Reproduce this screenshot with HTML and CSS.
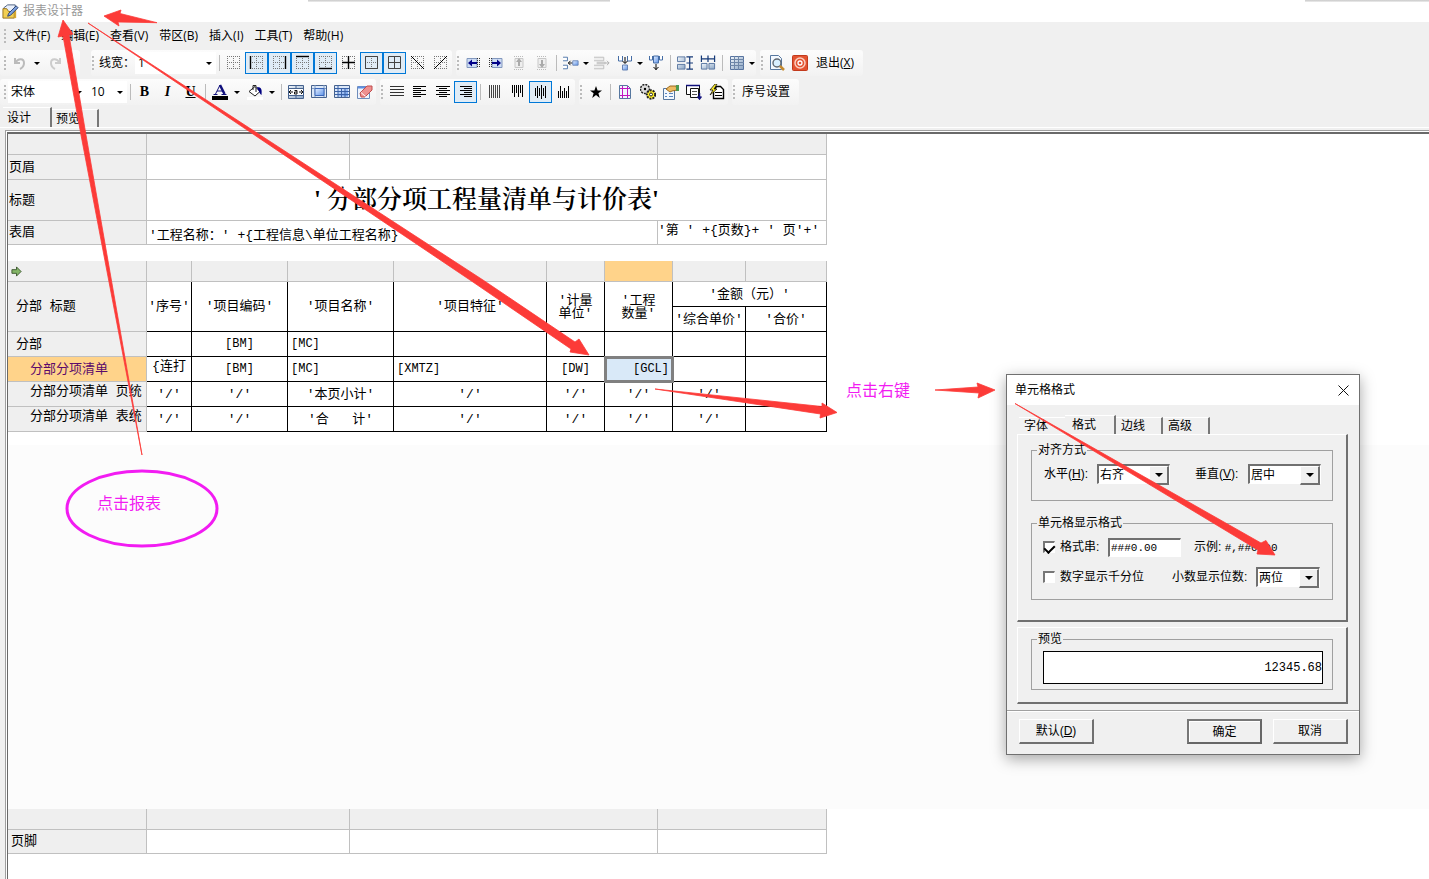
FILE: index.html
```html
<!DOCTYPE html>
<html lang="zh-CN">
<head>
<meta charset="utf-8">
<title>报表设计器</title>
<link rel="stylesheet" href="styles.css">
</head>
<body>
<svg class="sprite" aria-hidden="true">
  <defs>
    <linearGradient id="blue" x1="0" y1="0" x2="1" y2="1"><stop offset="0" stop-color="#e4efff"/><stop offset="1" stop-color="#5f93e8"/></linearGradient>
    <linearGradient id="steel" x1="0" y1="0" x2="1" y2="1"><stop offset="0" stop-color="#f2f7fc"/><stop offset="1" stop-color="#8ba5c4"/></linearGradient>
    <symbol id="dots" viewBox="0 0 16 16"><path d="M1.5 1v14M7.5 1v14M13.5 1v14M1 1.5h14M1 7.5h14M1 13.5h14" stroke="#777" fill="none" stroke-dasharray="1 1"/></symbol>
    <symbol id="b-left" viewBox="0 0 16 16"><use href="#dots"/><path d="M1.5 1v13" stroke="#000" stroke-width="1.4"/></symbol>
    <symbol id="b-right" viewBox="0 0 16 16"><use href="#dots"/><path d="M13.5 1v13" stroke="#000" stroke-width="1.4"/></symbol>
    <symbol id="b-top" viewBox="0 0 16 16"><use href="#dots"/><path d="M1 1.5h13" stroke="#000" stroke-width="1.4"/></symbol>
    <symbol id="b-bottom" viewBox="0 0 16 16"><use href="#dots"/><path d="M1 13.5h13" stroke="#000" stroke-width="1.4"/></symbol>
    <symbol id="b-cross" viewBox="0 0 16 16"><use href="#dots"/><path d="M1 7.5h13M7.5 1v13" stroke="#000" stroke-width="1.4"/></symbol>
    <symbol id="b-box" viewBox="0 0 16 16"><use href="#dots"/><path d="M1.5 1.5h12v12h-12z" stroke="#444" fill="none"/></symbol>
    <symbol id="b-all" viewBox="0 0 16 16"><path d="M1.5 1.5h12v12h-12zM7.5 1.500v12M1.500 7.5h12" stroke="#444" fill="none"/></symbol>
    <symbol id="b-d1" viewBox="0 0 16 16"><use href="#dots"/><path d="M1 1l13 13" stroke="#000"/></symbol>
    <symbol id="b-d2" viewBox="0 0 16 16"><use href="#dots"/><path d="M14 1L1 14" stroke="#000"/></symbol>
    <symbol id="undo" viewBox="0 0 16 16"><path d="M3 3v5h5M3.500 7.500C6 3 12 3 12 8c0 3-2 5-4 6" stroke="#bbb" stroke-width="2" fill="none"/></symbol>
    <symbol id="redo" viewBox="0 0 16 16"><path d="M13 3v5H8M12.500 7.500C10 3 4 3 4 8c0 3 2 5 4 6" stroke="#ccc" stroke-width="2" fill="none"/></symbol>
    <symbol id="ins-l" viewBox="0 0 16 16"><path d="M2 3.500h10v9H2z" fill="#cddcf4" stroke="#8298be"/><path d="M12.500 3v10M14.500 3v10" stroke="#333" stroke-dasharray="1 1"/><path d="M3 8l4-3.500V7h5v2H7v2.500z" fill="#000087"/></symbol>
    <symbol id="ins-r" viewBox="0 0 16 16"><path d="M4 3.500h10v9H4z" fill="#cddcf4" stroke="#8298be"/><path d="M1.500 3v10M3.500 3v10" stroke="#333" stroke-dasharray="1 1"/><path d="M13 8L9 4.500V7H4v2h5v2.500z" fill="#000087"/></symbol>
    <symbol id="ins-u" viewBox="0 0 16 16"><path d="M4 3.500h8v9H4z" fill="#eee" stroke="#c8c8c8"/><path d="M3 14.500h10M3 1.500h10" stroke="#bbb" stroke-dasharray="1 1"/><path d="M8 3l3 4H9v4H7V7H5z" fill="#aaa"/></symbol>
    <symbol id="ins-d" viewBox="0 0 16 16"><path d="M4 3.500h8v9H4z" fill="#eee" stroke="#c8c8c8"/><path d="M3 14.500h10M3 1.500h10" stroke="#bbb" stroke-dasharray="1 1"/><path d="M8 13l3-4H9V5H7v4H5z" fill="#aaa"/></symbol>
    <symbol id="row-ins" viewBox="0 0 18 16"><path d="M0 1.500h5v4H0M0 10.500h5v4H0" fill="#fff" stroke="#456da5"/><path d="M6 8h5M8.500 5.500L6 8l2.500 2.500" stroke="#000" fill="none"/><path d="M11 5.500h6v5h-6z" fill="url(#blue)" stroke="#6482b4"/></symbol>
    <symbol id="row-del" viewBox="0 0 18 16"><path d="M0 1.500h11v4H0M0 10.500h11v4H0" fill="#eee" stroke="#bbb"/><path d="M3 6.500h10v3H3z" fill="#ccc"/><path d="M12 8h5M14.500 5.500L17 8l-2.500 2.500" stroke="#aaa" fill="none"/></symbol>
    <symbol id="col-ins" viewBox="0 0 16 16"><path d="M1.500 1v5h4V1M10.500 1v5h4V1" fill="#fff" stroke="#456da5"/><path d="M8 8V2M5.500 6L8 8.500 10.500 6" stroke="#000" fill="none"/><path d="M5.500 10h5v5h-5z" fill="url(#blue)" stroke="#6482b4"/></symbol>
    <symbol id="col-del" viewBox="0 0 16 16"><path d="M1.500 1v4h3V1M11.500 1v4h3V1" fill="#fff" stroke="#456da5"/><path d="M5.500 1h5v7h-5z" fill="url(#blue)" stroke="#456da5"/><path d="M8 9v6M5.500 12L8 14.500 10.500 12" stroke="#000" fill="none"/></symbol>
    <symbol id="h-even" viewBox="0 0 17 16"><path d="M.5 1.500h8v5h-8zM.5 9.500h8v5h-8z" fill="url(#steel)" stroke="#5874a0"/><path d="M10 1.500h7M10 8h7M10 14.500h7M13.500 1v14" stroke="#163a78" stroke-width="1.300"/></symbol>
    <symbol id="w-even" viewBox="0 0 17 16"><path d="M1.500 8.500h6v6h-6zM9.500 8.500h6v6h-6z" fill="url(#steel)" stroke="#5874a0"/><path d="M1.500 0v7M8.500 0v7M15.500 0v7M1 3.500h15" stroke="#163a78" stroke-width="1.300"/></symbol>
    <symbol id="grid" viewBox="0 0 16 16"><path d="M1.500 1.500h13v13h-13z" fill="url(#steel)" stroke="#5874a0"/><path d="M1 4.500h14M1 7.500h14M1 10.500h14M5.500 1v14M9.500 1v14" stroke="#6e86a8"/></symbol>
    <symbol id="find" viewBox="0 0 16 16"><path d="M1.500.5h8l3 3v11h-11z" fill="#f3f8fe" stroke="#56779f"/><circle cx="8" cy="8" r="4" fill="#d8efff" stroke="#5f6770" stroke-width="1.400"/><path d="M11 11l4 4" stroke="#c58a2e" stroke-width="2.500"/></symbol>
    <symbol id="quit" viewBox="0 0 16 16"><rect x=".5" y=".5" width="15" height="15" rx="1" fill="#e35330" stroke="#c23a1c"/><circle cx="8" cy="8" r="5" fill="none" stroke="#fbd0c0" stroke-width="1.500"/><circle cx="8" cy="8" r="2" fill="none" stroke="#fff" stroke-width="1.300"/></symbol>
    <symbol id="font-color" viewBox="0 0 16 16"><path d="M3.500 10L8 1" stroke="#10107c" fill="none"/><path d="M8 1l4.500 9" stroke="#10107c" stroke-width="2.500" fill="none"/><path d="M5 7h6M1.500 10.500h4M9.500 10.500h5" stroke="#10107c" fill="none"/><path d="M0 12h16v4H0z"/></symbol>
    <symbol id="bucket" viewBox="0 0 16 16"><path d="M2 7.500l6-5 5 5-5 4.500z" fill="#fff" stroke="#222"/><path d="M6 6V1.500h3V8" fill="none" stroke="#222"/><path d="M10 3c5 0 5 3 4.500 8-2-1-2-4-4-6z" fill="#000080"/><path d="M0 13h16v3H0z" fill="#fff"/></symbol>
    <symbol id="merge" viewBox="0 0 16 16"><path d="M.5 1.500h15v13H.5z" fill="url(#steel)" stroke="#46628e"/><path d="M1 4.500h14M1 11.500h14M8 1v3M8 12v3" stroke="#46628e"/><path d="M1 5h14v6H1z" fill="#fff"/><path d="M1 8h4M3 6L1 8l2 2M15 8h-4M13 6l2 2-2 2M6.500 6.500h2.500v3.500H6.500V8H9" stroke="#111" fill="none"/></symbol>
    <symbol id="cell" viewBox="0 0 16 16"><path d="M.5 1.500h15v12H.5z" fill="#dce8f8" stroke="#46628e"/><path d="M4 1v12M1 4.500h14M13 1v12" stroke="#7f9ac0"/><path d="M4 4.500h9v7H4z" fill="url(#blue)" stroke="#3c68ba"/></symbol>
    <symbol id="cells" viewBox="0 0 16 16"><path d="M.5 1.500h15v12H.5z" fill="#dce8f8" stroke="#46628e"/><path d="M4 4.500h10v8H4z" fill="url(#blue)"/><path d="M4 1v12M1 4.500h14M7.500 4v9M11 4v9M1 7.500h14M1 10.500h14" stroke="#3a62a8"/></symbol>
    <symbol id="erase" viewBox="0 0 16 16"><path d="M.5 2.500h12v12H.5z" fill="#eef4fd" stroke="#6d8cbb"/><path d="M1 3.500h11" stroke="#5f8fe0" stroke-width="2"/><path d="M3 9l7-7h5v4l-7 7H4z" fill="#ee9090" stroke="#c04d4d"/><path d="M4 8.500l4.500 4" stroke="#fff"/></symbol>
    <symbol id="a-just" viewBox="0 0 16 16"><path d="M1 2.500h14M1 5.500h14M1 8.500h14M1 11.500h14" stroke="#333"/></symbol>
    <symbol id="a-left" viewBox="0 0 16 16"><path d="M1 2.500h13M1 4.500h8M1 6.500h13M1 8.500h8M1 10.500h13M1 12.500h8" stroke="#000"/></symbol>
    <symbol id="a-center" viewBox="0 0 16 16"><path d="M1 2.500h14M4 4.500h8M1 6.500h14M4 8.500h8M1 10.500h14M4 12.500h8" stroke="#000"/></symbol>
    <symbol id="a-right" viewBox="0 0 16 16"><path d="M2 2.500h12M6 4.500h8M2 6.500h12M6 8.500h8M2 10.500h12M6 12.500h8" stroke="#000"/></symbol>
    <symbol id="v-just" viewBox="0 0 16 16"><path d="M2.500 1v13M4.500 1v13M6.500 1v13M8.500 1v13M10.500 1v13M12.500 1v13" stroke="#444"/></symbol>
    <symbol id="v-top" viewBox="0 0 16 16"><path d="M2.500 1v8M4.500 1v12M6.500 1v8M8.500 1v12M10.500 1v8M12.500 1v12" stroke="#000"/></symbol>
    <symbol id="v-mid" viewBox="0 0 16 16"><path d="M2.500 4v8M4.500 2v12M6.500 4v8M8.500 1v14M10.500 4v8M12.500 2v12" stroke="#000"/></symbol>
    <symbol id="v-bot" viewBox="0 0 16 16"><path d="M2.500 7v7M4.500 2v12M6.500 7v7M8.500 4v10M10.500 7v7M12.500 2v12" stroke="#000"/></symbol>
    <symbol id="star" viewBox="0 0 16 16"><path d="M8 2l1.600 4.500H14l-3.600 2.700L11.800 14 8 11l-3.800 3 1.400-4.800L2 6.500h4.400z"/></symbol>
    <symbol id="margins" viewBox="0 0 16 16"><path d="M2.500 1.500h8l3 3v10h-11z" fill="#f3f8fe" stroke="#56779f"/><path d="M5.500 2v12M10.500 2v12M3 4.500h10M3 11.500h10" stroke="#c018c0"/></symbol>
    <symbol id="gears" viewBox="0 0 16 16"><circle cx="5" cy="5" r="4.500" fill="#ddd" stroke="#222" stroke-width="1.500" stroke-dasharray="2 1"/><circle cx="11" cy="10.500" r="4.200" fill="#ffef2a" stroke="#222" stroke-width="2" stroke-dasharray="2 1"/><circle cx="5" cy="5" r="1.200"/><circle cx="11" cy="10.500" r="1.500" fill="#fff" stroke="#222"/></symbol>
    <symbol id="props" viewBox="0 0 16 16"><path d="M.5 4.500h11v11H.5z" fill="#f3f8fe" stroke="#56779f"/><path d="M2 9.500h2M6 9.500h4M2 12.500h2M6 12.500h4" stroke="#5b86bf"/><path d="M3 5l4-3h6l1 4-5 1-2 1z" fill="#eebb62" stroke="#9b6a20"/><path d="M13 1h3v6h-3z" fill="#4d9a50"/></symbol>
    <symbol id="list" viewBox="0 0 16 16"><path d="M.5 1.500h13v9H.5z" fill="#fff" stroke="#111"/><path d="M0 1.500h14" stroke="#10107c" stroke-width="1.500"/><path d="M4.500 4.500h8v9h-8z" fill="#fff" stroke="#111"/><path d="M6 7.500h5M6 10.500h5" stroke="#555"/><path d="M13.500 9v6M11.500 12.500l2 2.500 2-2.500" stroke="#10107c" stroke-width="1.500" fill="none"/></symbol>
    <symbol id="script" viewBox="0 0 16 16"><path d="M4.500 6.500l3-4h4l3 3v9h-10z" fill="#fff" stroke="#000" stroke-width="1.400"/><path d="M6 8.500h7M6 11.500h7" stroke="#000"/><path d="M6 0L1 6h3l-3 5 7-6H5l3-5z" fill="#ffef2a" stroke="#000" stroke-width=".7"/></symbol>
  </defs>
</svg>

<div class="app">
  <header class="titlebar">
    <svg class="logo" viewBox="0 0 18 18" aria-hidden="true"><path d="M2 5l4-3h8v12H2z" fill="#e9f0fb" stroke="#4a5f80"/><path d="M1 6h4l2 3h6v7H1z" fill="#f2cf52" stroke="#94701c"/><path d="M13 7h2v9h-2z" fill="#d9a92f"/><path d="M7 11l8-8 2 2-8 8-3 1z" fill="#7da0dd" stroke="#28406e"/></svg>
    <span>报表设计器</span>
  </header>

  <nav class="menubar">
    <i class="grip"></i>
    <button>文件(F)</button><button>编辑(E)</button><button>查看(V)</button><button>带区(B)</button><button>插入(I)</button><button>工具(T)</button><button>帮助(H)</button>
  </nav>

  <div class="toolrow">
    <div class="tools tools-history">
      <i class="grip"></i>
      <button class="tool" aria-label="撤销"><svg><use href="#undo"/></svg></button><button class="drop" aria-label="撤销列表"></button>
      <button class="tool" aria-label="重做"><svg><use href="#redo"/></svg></button>
    </div>
    <div class="tools">
      <i class="grip"></i>
      <label class="tool-label" for="line-width">线宽：</label>
      <span class="combo combo-line"><select id="line-width"><option>1</option></select></span>
      <i class="sep"></i>
      <button class="tool" aria-label="无边框"><svg><use href="#dots"/></svg></button>
      <button class="tool on" aria-label="左边框"><svg><use href="#b-left"/></svg></button>
      <button class="tool on" aria-label="右边框"><svg><use href="#b-right"/></svg></button>
      <button class="tool on" aria-label="上边框"><svg><use href="#b-top"/></svg></button>
      <button class="tool on" aria-label="下边框"><svg><use href="#b-bottom"/></svg></button>
      <button class="tool" aria-label="内边框"><svg><use href="#b-cross"/></svg></button>
      <button class="tool on" aria-label="外边框"><svg><use href="#b-box"/></svg></button>
      <button class="tool on" aria-label="全部边框"><svg><use href="#b-all"/></svg></button>
      <button class="tool" aria-label="斜线"><svg><use href="#b-d1"/></svg></button>
      <button class="tool" aria-label="反斜线"><svg><use href="#b-d2"/></svg></button>
    </div>
    <div class="tools">
      <i class="grip"></i>
      <button class="tool" aria-label="左插列"><svg><use href="#ins-l"/></svg></button>
      <button class="tool" aria-label="右插列"><svg><use href="#ins-r"/></svg></button>
      <button class="tool" aria-label="上插行"><svg><use href="#ins-u"/></svg></button>
      <button class="tool" aria-label="下插行"><svg><use href="#ins-d"/></svg></button>
      <i class="sep"></i>
      <button class="tool" aria-label="插入行"><svg><use href="#row-ins"/></svg></button><button class="drop narrow" aria-label="插入行选项"></button>
      <button class="tool" aria-label="删除行"><svg><use href="#row-del"/></svg></button>
      <button class="tool" aria-label="插入列"><svg><use href="#col-ins"/></svg></button><button class="drop narrow" aria-label="插入列选项"></button>
      <button class="tool" aria-label="删除列"><svg><use href="#col-del"/></svg></button>
      <i class="sep"></i>
      <button class="tool" aria-label="等高"><svg><use href="#h-even"/></svg></button>
      <button class="tool" aria-label="等宽"><svg><use href="#w-even"/></svg></button>
      <i class="sep"></i>
      <button class="tool" aria-label="表格"><svg><use href="#grid"/></svg></button><button class="drop narrow" aria-label="表格选项"></button>
    </div>
    <div class="tools">
      <i class="grip"></i>
      <button class="tool" aria-label="预览"><svg><use href="#find"/></svg></button>
      <button class="tool" aria-label="关闭"><svg><use href="#quit"/></svg></button>
      <button class="text-tool">退出(<u>X</u>)</button>
    </div>
  </div>

  <div class="toolrow">
    <div class="tools">
      <i class="grip"></i>
      <span class="combo combo-font"><select aria-label="字体"><option>宋体</option></select></span>
      <span class="combo combo-size"><select aria-label="字号"><option>10</option></select></span>
      <i class="sep"></i>
      <button class="tool letter">B</button>
      <button class="tool letter"><em>I</em></button>
      <button class="tool letter"><u>U</u></button>
      <i class="sep"></i>
      <button class="tool" aria-label="字体颜色"><svg><use href="#font-color"/></svg></button><button class="drop" aria-label="选择字体颜色"></button>
      <button class="tool" aria-label="填充颜色"><svg><use href="#bucket"/></svg></button><button class="drop" aria-label="选择填充颜色"></button>
      <i class="sep"></i>
      <button class="tool" aria-label="合并"><svg><use href="#merge"/></svg></button>
      <button class="tool" aria-label="单元格"><svg><use href="#cell"/></svg></button>
      <button class="tool" aria-label="拆分"><svg><use href="#cells"/></svg></button>
      <button class="tool" aria-label="清除"><svg><use href="#erase"/></svg></button>
    </div>
    <div class="tools">
      <i class="grip"></i>
      <button class="tool" aria-label="两端对齐"><svg><use href="#a-just"/></svg></button>
      <button class="tool" aria-label="左对齐"><svg><use href="#a-left"/></svg></button>
      <button class="tool" aria-label="居中"><svg><use href="#a-center"/></svg></button>
      <button class="tool on" aria-label="右对齐"><svg><use href="#a-right"/></svg></button>
      <i class="sep"></i>
      <button class="tool" aria-label="垂直分散"><svg><use href="#v-just"/></svg></button>
      <button class="tool" aria-label="顶端对齐"><svg><use href="#v-top"/></svg></button>
      <button class="tool on" aria-label="垂直居中"><svg><use href="#v-mid"/></svg></button>
      <button class="tool" aria-label="底端对齐"><svg><use href="#v-bot"/></svg></button>
    </div>
    <div class="tools">
      <i class="grip"></i>
      <button class="tool" aria-label="收藏"><svg><use href="#star"/></svg></button>
      <i class="sep"></i>
      <button class="tool" aria-label="页边距"><svg><use href="#margins"/></svg></button>
      <button class="tool" aria-label="设置"><svg><use href="#gears"/></svg></button>
      <button class="tool" aria-label="属性"><svg><use href="#props"/></svg></button>
      <button class="tool" aria-label="列表"><svg><use href="#list"/></svg></button>
      <button class="tool" aria-label="脚本"><svg><use href="#script"/></svg></button>
    </div>
    <div class="tools">
      <i class="grip"></i>
      <button class="text-tool">序号设置</button>
    </div>
  </div>

  <div class="tabs main-tabs">
    <button class="tab active">设计</button><button class="tab">预览</button>
  </div>

  <main class="frame">
    <div class="canvas">
      <table class="band page-band">
        <colgroup><col class="w139"><col class="w203"><col class="w308"><col class="w169"></colgroup>
        <tr class="head"><th></th><td></td><td></td><td></td></tr>
        <tr class="r25"><th>页眉</th><td></td><td></td><td></td></tr>
        <tr class="r41"><th>标题</th><td colspan="3" class="report-title">'&nbsp;分部分项工程量清单与计价表'</td></tr>
        <tr class="r24"><th>表眉</th><td colspan="2" class="low">'工程名称：'&nbsp;+{工程信息\单位工程名称}</td><td class="high">'第&nbsp;'&nbsp;+{页数}+&nbsp;'&nbsp;页'+'</td></tr>
      </table>
      <table class="band data-band">
        <colgroup><col class="w139"><col class="w45"><col class="w96"><col class="w106"><col class="w153"><col class="w58"><col class="w68"><col class="w73"><col class="w81"></colgroup>
        <tr class="head"><th><svg class="go" viewBox="0 0 12 12" aria-hidden="true"><path d="M1 4h5V1l5 5-5 5V8H1z" fill="#83b566" stroke="#39552c"/></svg></th><td></td><td></td><td></td><td></td><td></td><td class="picked"></td><td></td><td></td></tr>
        <tr class="r25"><th rowspan="2" class="in1">分部&nbsp;标题</th><td rowspan="2">'序号'</td><td rowspan="2">'项目编码'</td><td rowspan="2">'项目名称'</td><td rowspan="2">'项目特征'</td><td rowspan="2">'计量<br>单位'</td><td rowspan="2">'工程<br>数量'</td><td colspan="2">'金额（元）'</td></tr>
        <tr class="r25"><td>'综合单价'</td><td>'合价'</td></tr>
        <tr class="r25"><th class="in1">分部</th><td></td><td class="code">[BM]</td><td class="code left">[MC]</td><td></td><td></td><td></td><td></td><td></td></tr>
        <tr class="r25"><th class="in2 picked">分部分项清单</th><td class="high">{连打</td><td class="code">[BM]</td><td class="code left">[MC]</td><td class="code left">[XMTZ]</td><td class="code">[DW]</td><td class="code right cursor">[GCL]</td><td></td><td></td></tr>
        <tr class="r25"><th class="in2 high">分部分项清单&nbsp;页统</th><td>'/'</td><td>'/'</td><td>'本页小计'</td><td>'/'</td><td>'/'</td><td>'/'</td><td>'/'</td><td></td></tr>
        <tr class="r25"><th class="in2 high">分部分项清单&nbsp;表统</th><td>'/'</td><td>'/'</td><td>'合&nbsp;&nbsp;&nbsp;计'</td><td>'/'</td><td>'/'</td><td>'/'</td><td>'/'</td><td></td></tr>
      </table>
      <div class="blank"></div>
      <table class="band page-band foot-band">
        <colgroup><col class="w139"><col class="w203"><col class="w308"><col class="w169"></colgroup>
        <tr class="head"><th></th><td></td><td></td><td></td></tr>
        <tr class="r24"><th>页脚</th><td></td><td></td><td></td></tr>
      </table>
    </div>
  </main>
</div>

<i class="edge-shadow edge-mid"></i>
<i class="edge-shadow edge-right"></i>

<section class="dialog" role="dialog" aria-labelledby="dlg-title">
  <header class="dialog-title">
    <span id="dlg-title">单元格格式</span>
    <button class="close" aria-label="关闭"><svg viewBox="0 0 11 11"><path d="M.5.5l10 10M10.500.5l-10 10" stroke="#111" fill="none"/></svg></button>
  </header>
  <div class="dialog-body">
    <div class="tabs dialog-tabs">
      <button class="tab">字体</button><button class="tab active">格式</button><button class="tab">边线</button><button class="tab">高级</button>
    </div>
    <div class="panel panel-format">
      <fieldset>
        <legend>对齐方式</legend>
        <div class="fields">
          <label for="h-align">水平(<u>H</u>):</label>
          <span class="combo sunken w72"><select id="h-align"><option>右齐</option></select></span>
          <label class="second" for="v-align">垂直(<u>V</u>):</label>
          <span class="combo sunken w72"><select id="v-align"><option>居中</option></select></span>
        </div>
      </fieldset>
      <fieldset class="display-format">
        <legend>单元格显示格式</legend>
        <div class="fields">
          <label><input type="checkbox" class="check" checked>格式串:</label>
          <input class="pattern" type="text" value="###0.00" aria-label="格式串">
          <span class="second">示例: <span class="mask">#,##0.00</span></span>
        </div>
        <div class="fields">
          <label><input type="checkbox" class="check">数字显示千分位</label>
          <label class="digits" for="digits">小数显示位数:</label>
          <span class="combo sunken w64"><select id="digits"><option>两位</option></select></span>
        </div>
      </fieldset>
    </div>
    <div class="panel panel-preview">
      <fieldset>
        <legend>预览</legend>
        <output class="sample">12345.68</output>
      </fieldset>
    </div>
  </div>
  <footer class="dialog-actions">
    <button class="push">默认(<u>D</u>)</button>
    <button class="push primary">确定</button>
    <button class="push">取消</button>
  </footer>
</section>

<svg class="marks" viewBox="0 0 1429 879" aria-hidden="true">
  <g fill="#fc3b38" stroke="#fc3b38" stroke-width=".8">
    <path d="M104 16l17-6-1 3.500 37 9.200-39-.7 1 4z"/>
    <path d="M63 20l10 14-4 1 17 100 56 320L81 135 63 36l-5 1z"/>
    <path d="M88 23L483 280l92 62 4-3 10 16-19-3 1-3-101-69z"/>
    <path d="M655 389l167 17.500V403l15 9.500-17 5.500.5-4z"/>
    <path d="M935 390l43-3-1-4 18 7-17 8 1-5z"/>
    <path d="M1015 403.500l246 139.500 5-2.500 9 14.500-18-1 1-4z"/>
  </g>
  <ellipse cx="142" cy="508.500" rx="75" ry="37.500" fill="none" stroke="#f21cf2" stroke-width="3"/>
</svg>
<p class="note note-report">点击报表</p>
<p class="note note-click">点击右键</p>
</body>
</html>
```

FILE: styles.css
```css
* { box-sizing: border-box; }

body {
  margin: 0;
  background: #fff;
  color: #000;
  font: 12px/16px "Open Sans", "Noto Sans CJK SC", sans-serif;
}

button, select, input {
  margin: 0;
  padding: 0;
  border: 0;
  background: none;
  color: inherit;
  font: inherit;
}

.sprite { position: absolute; width: 0; height: 0; }

.app {
  display: flex;
  flex-direction: column;
  min-height: 100vh;
  background: #f0f0f0;
}

.titlebar {
  display: flex;
  align-items: center;
  gap: 4px;
  height: 22px;
  padding-left: 2px;
  background: #fff;
  color: #999;
}
.logo { width: 17px; height: 17px; }

.menubar {
  display: flex;
  align-items: center;
  gap: 11px;
  height: 28px;
  padding-left: 4px;
}
.menubar button { white-space: nowrap; }
.menubar .grip { margin-right: -6px; }

.grip {
  flex: none;
  width: 4px;
  height: 14px;
  background: repeating-linear-gradient(#bbb 0 2px, transparent 2px 4px) no-repeat left / 2px 14px;
}

/* toolbars */
.toolrow {
  display: flex;
  gap: 4px;
  height: 29px;
}
.tools {
  display: flex;
  align-items: center;
  height: 26px;
  padding-left: 1px;
  border-radius: 3px;
  background: linear-gradient(#fcfcfc, #f2f2f2);
}
.toolrow .tools:first-child { padding-left: 4px; }
.tools-history { width: 80px; margin-right: 7px; }
.tool {
  display: flex;
  flex: none;
  align-items: center;
  justify-content: center;
  width: 23px;
  height: 22px;
}
.tool svg { width: 16px; height: 16px; }
.tool.on { border: 1px solid #0078d7; background: #e0ecf6; }
.letter { font: bold 14px "Liberation Serif", serif; }
.text-tool { padding: 0 9px 0 5px; white-space: nowrap; }
.drop { display: flex; flex: none; justify-content: center; width: 12px; height: 22px; align-items: center; }
.drop.narrow { width: 8px; }
.drop::after, .combo::after {
  content: "";
  border: 3px solid transparent;
  border-top-color: #000;
  border-bottom: 0;
}
.sep { flex: none; width: 1px; height: 16px; margin: 0 2px 0 3px; background: #bbb; }
.tool-label { padding-left: 3px; white-space: nowrap; }

.combo { position: relative; display: flex; flex: none; align-items: center; background: #fff; }
.combo::after { position: absolute; right: 4px; pointer-events: none; }
.combo select { width: 100%; height: 22px; appearance: none; outline: 0; }
.combo-line { width: 81px; }
.combo-line select { padding-left: 3px; }
.combo-font { width: 78px; }
.combo-font select { padding-left: 3px; }
.combo-size { width: 41px; }
.combo-size select { padding-left: 5px; }

/* tabs */
.tabs { display: flex; align-items: flex-end; }
.tab {
  height: 18px;
  border-top: 1px solid #fff;
  border-right: 2px solid #777;
  text-align: left;
  line-height: 16px;
}
.main-tabs { height: 20px; padding-left: 3px; border-bottom: 1px solid #fff; }
.main-tabs .tab { width: 47px; padding-left: 4px; }
.main-tabs .active { height: 20px; width: 49px; }

/* report */
.frame {
  display: flex;
  flex: 1;
  margin: 2px 0 0 5px;
  padding: 1px 0 0 1px;
  border-top: 1px solid #a0a0a0;
  border-left: 1px solid #a0a0a0;
  background: #fff;
}
.canvas {
  display: flex;
  flex: 1;
  flex-direction: column;
  border-top: 2px solid #696969;
  border-left: 1px solid #696969;
  padding-bottom: 25px;
  background: #fff;
}
.band {
  flex: none;
  width: 819px;
  table-layout: fixed;
  border-spacing: 0;
  font: 13px/13px "Liberation Mono", "Noto Sans CJK SC", monospace;
}
.band th, .band td {
  padding: 0;
  border: solid #c0c0c0;
  border-width: 0 1px 1px 0;
  font-weight: normal;
  text-align: center;
  white-space: nowrap;
}
.band th { background: #efefef; text-align: left; padding-left: 1px; }
.band .head td { background: #efefef; }
.band .head { height: 21px; }
.r24 { height: 24px; }
.r25 { height: 25px; }
.r41 { height: 41px; }
.w45 { width: 45px; }
.w58 { width: 58px; }
.w68 { width: 68px; }
.w73 { width: 73px; }
.w81 { width: 81px; }
.w96 { width: 96px; }
.w106 { width: 106px; }
.w139 { width: 139px; }
.w153 { width: 153px; }
.w169 { width: 169px; }
.w203 { width: 203px; }
.w308 { width: 308px; }

.data-band { margin-top: 16px; }
.data-band tr:not(.head) td { border-color: #000; }
.band .report-title { font: 600 25px/30px "Liberation Serif", "Noto Serif CJK SC", "Noto Sans CJK SC", serif; }
.band .low { text-align: left; vertical-align: bottom; padding: 0 0 2px 2px; }
.band .high { vertical-align: top; padding-top: 3px; }
.page-band .high { text-align: left; }
.band .in1 { padding-left: 8px; }
.band .in2 { padding-left: 22px; }
.band .picked, .band .head .picked { background: #ffd38a; }
.band th.picked { color: #5b0a6b; }
.band .code { font-size: 12px; }
.band .left { text-align: left; padding-left: 3px; }
.band .right { text-align: right; padding-right: 3px; }
.band .cursor { background: #d9e9f8; outline: 3px solid #808080; outline-offset: -2px; }
.go { display: block; width: 11px; height: 11px; margin-left: 2px; }
.foot-band th { padding-left: 3px; }
.blank { flex: 1; min-height: 40px; margin-top: 13px; background: #fcfcfc; }

.edge-shadow { position: absolute; top: 0; height: 2px; background: linear-gradient(#c8c8c8, #eee); }
.edge-mid { left: 308px; width: 302px; }
.edge-right { right: 0; width: 124px; }

/* cell format dialog */
.dialog {
  position: absolute;
  top: 374px;
  left: 1006px;
  width: 354px;
  border: 1px solid #707070;
  background: #f0f0f0;
  box-shadow: 0 4px 14px rgba(0, 0, 0, .35);
  font: 12px/16px "Liberation Sans", "Noto Sans CJK SC", sans-serif;
}
.dialog-title {
  display: flex;
  align-items: center;
  justify-content: space-between;
  height: 30px;
  padding: 0 10px 0 8px;
  background: #fff;
}
.close { display: flex; }
.close svg { width: 11px; height: 11px; }
.dialog-body { padding: 10px 11px 6px 10px; }
.dialog-tabs { height: 19px; padding-left: 2px; }
.dialog-tabs .tab { width: 47px; height: 17px; padding-left: 5px; }
.dialog-tabs .active { width: 51px; height: 19px; padding-left: 7px; }
.dialog-tabs .tab:first-child { width: 46px; border-right: 0; }
.panel {
  border: solid;
  border-width: 1px 2px 2px 1px;
  border-color: #fff #707070 #707070 #fff;
  padding: 7px 13px 0;
}
.panel-format { height: 188px; }
.panel-preview { height: 77px; margin-top: 5px; padding-top: 3px; }
fieldset {
  min-width: 0;
  height: 59px;
  margin: 0;
  padding: 0 10px 0 5px;
  border: 1px solid #a0a0a0;
}
legend { padding: 0 1px; }
.display-format { height: 85px; margin-top: 14px; }
.fields { display: flex; align-items: center; height: 20px; margin: 6px 0 0 7px; }
.fields label { display: flex; flex: none; align-items: center; white-space: nowrap; }
.fields label:first-child { width: 53px; }
.fields .second { width: 53px; margin-left: 25px; white-space: nowrap; }
.display-format .fields { margin-left: 6px; }
.display-format .fields label:first-child { width: 65px; }
.display-format .second { margin-left: 13px; }
.display-format .fields + .fields { margin-top: 10px; }
.fields .digits { width: 84px; margin-left: 64px; }
.mask { font: 11px "Liberation Mono", monospace; }
.sunken, .pattern {
  border: solid;
  border-width: 2px 1px 1px 2px;
  border-color: #707070 #fff #fff #707070;
  background: #fff;
}
.sunken { height: 20px; }
.sunken::after { right: 6px; border-width: 4px 4px 0; }
.sunken::before {
  content: "";
  position: absolute;
  top: 0;
  right: 0;
  width: 17px;
  height: 16px;
  border: solid;
  border-width: 1px 2px 2px 1px;
  border-color: #fff #707070 #707070 #fff;
  background: #f0f0f0;
  pointer-events: none;
}
.sunken select { height: 17px; padding-left: 1px; }
.w72 { width: 73px; }
.w64 { width: 64px; }
.pattern { width: 73px; height: 19px; padding-left: 1px; font: 11px "Liberation Mono", monospace; }
.check {
  flex: none;
  appearance: none;
  width: 12px;
  height: 12px;
  margin-right: 5px;
  border: solid;
  border-width: 2px 1px 1px 2px;
  border-color: #777 #fff #fff #777;
  background: #fff;
}
.check:checked { display: grid; justify-content: center; }
.check:checked::after {
  content: "";
  width: 5px;
  height: 8px;
  border: solid #000;
  border-width: 0 2px 2px 0;
  rotate: 45deg;
}
.sample {
  display: flex;
  align-items: center;
  justify-content: flex-end;
  height: 33px;
  margin: 4px -1px 0 6px;
  border: 1px solid #000;
  background: #fff;
  font: 12px "Liberation Mono", monospace;
}
.dialog-actions {
  display: flex;
  gap: 11px;
  height: 44px;
  padding: 8px 11px 0 12px;
  border-top: 1px solid #a0a0a0;
  box-shadow: inset 0 1px #fff;
}
.push {
  width: 75px;
  height: 25px;
  border: solid;
  border-width: 1px 2px 2px 1px;
  border-color: #fff #707070 #707070 #fff;
}
.push:first-child { margin-right: auto; }
.primary { border-width: 2px; border-color: #777 #666 #666 #777; box-shadow: inset 1px 1px #fff; }

/* annotations */
.marks { position: absolute; top: 0; left: 0; width: 1429px; height: 879px; pointer-events: none; }
.note { position: absolute; margin: 0; color: #f21cf2; font-size: 16px; line-height: 20px; }
.note-report { top: 493px; left: 97px; }
.note-click { top: 380px; left: 846px; }
```
